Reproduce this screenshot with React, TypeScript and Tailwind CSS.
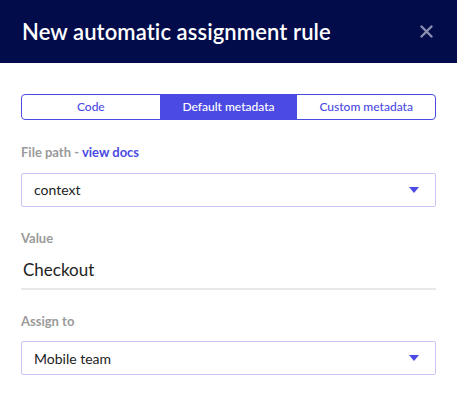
import React from "react";

function Caret() {
  return (
    <svg width="10" height="6" viewBox="0 0 10 6" className="shrink-0">
      <path d="M0 0h10L5 6z" fill="#4b4be3" />
    </svg>
  );
}

function Select({ value }: { value: string }) {
  return (
    <div className="h-[34px] border border-[#c9c7f6] rounded-[2px] flex items-center justify-between pl-[12px] pr-[16px]">
      <span className="text-[14px] text-[#222]">{value}</span>
      <Caret />
    </div>
  );
}

export default function App() {
  const tabs = ["Code", "Default metadata", "Custom metadata"];
  return (
    <div className="w-[457px] h-[402px] bg-white font-['Lato',sans-serif] overflow-hidden">
      {/* Header */}
      <header className="h-[63px] bg-[#020c4b] flex items-center justify-between pl-[22px] pr-[24px]">
        <h1 className="text-[22px] font-semibold text-white tracking-[0.1px]">New automatic assignment rule</h1>
        <svg width="13" height="13" viewBox="0 0 13 13">
          <path d="M1.5 1.5l10 10M11.5 1.5l-10 10" stroke="#8a8fb0" strokeWidth="2.4" strokeLinecap="round" />
        </svg>
      </header>

      <div className="px-[21px] pt-[31px]">
        {/* Tabs */}
        <div className="grid grid-cols-3 h-[26px] border border-[#4b4be3] rounded-[4px] overflow-hidden">
          {tabs.map((t, i) => (
            <div
              key={t}
              className={`flex items-center justify-center text-[12px] font-medium ${
                i === 1 ? "bg-[#4b4be3] text-white" : "text-[#4b4be3]"
              }`}
            >
              {t}
            </div>
          ))}
        </div>

        <p className="mt-[23px] text-[13px] font-bold text-[#9a9a9a]">
          File path - <span className="text-[#4b4be3]">view docs</span>
        </p>
        <div className="mt-[10px]">
          <Select value="context" />
        </div>

        <p className="mt-[22px] text-[13px] font-bold text-[#9a9a9a]">Value</p>
        <div className="mt-[9px] pb-[5px] border-b-2 border-[#e8e8e8] pl-[2px] text-[17px] text-[#222]">Checkout</div>

        <p className="mt-[22px] text-[13px] font-bold text-[#9a9a9a]">Assign to</p>
        <div className="mt-[10px]">
          <Select value="Mobile team" />
        </div>
      </div>
    </div>
  );
}
